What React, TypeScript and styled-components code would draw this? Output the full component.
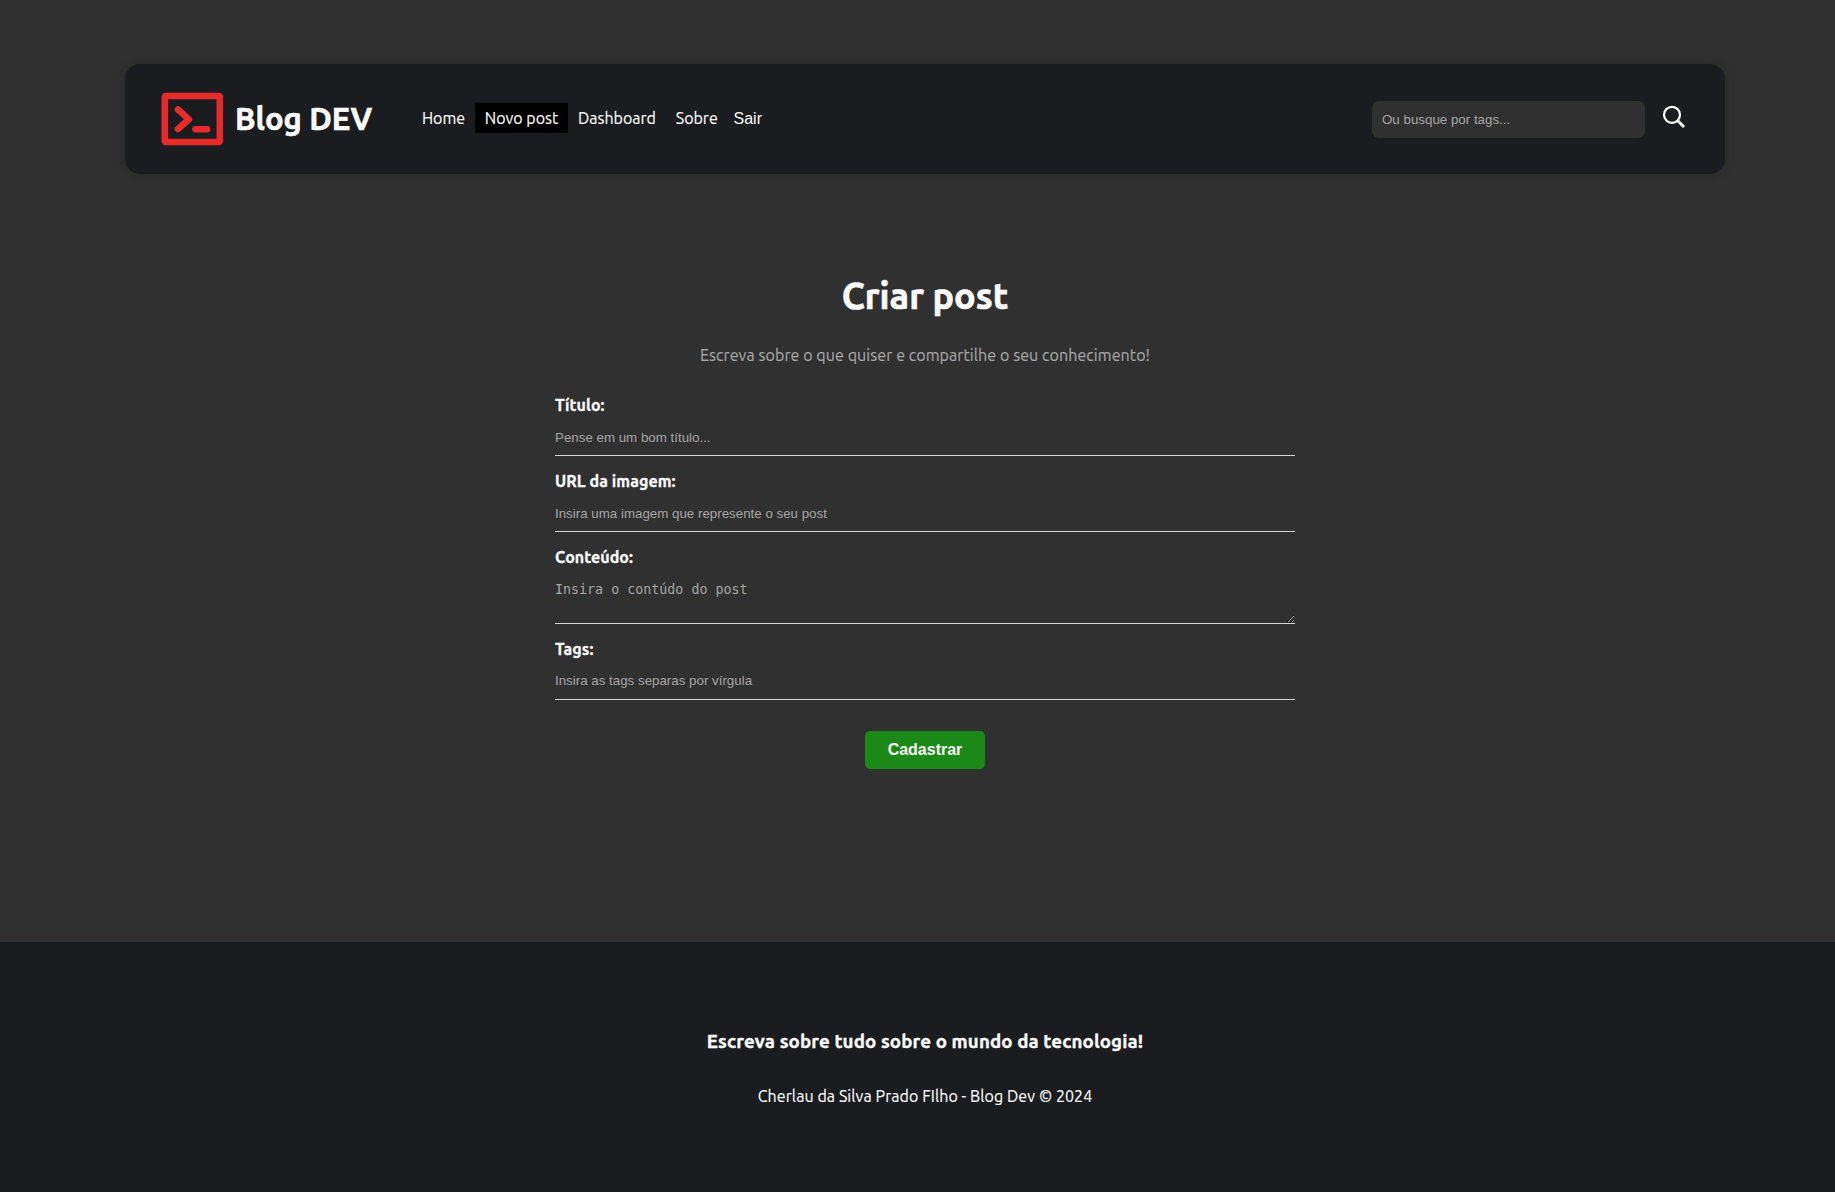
import React from "react";
import styled, { createGlobalStyle } from "styled-components";

const GlobalStyle = createGlobalStyle`
  * { box-sizing: border-box; margin: 0; padding: 0; }
  body {
    background: #303030;
    color: #fafafa;
    font-family: Ubuntu, "Noto Sans", sans-serif;
    font-size: 16px;
    line-height: 18px;
  }
`;

const Page = styled.div`
  min-height: 1192px;
  display: flex;
  flex-direction: column;
  align-items: center;
  padding-top: 64px;
`;

const Header = styled.header`
  width: 1600px;
  height: 110px;
  margin-left: 15px;
  display: flex;
  align-items: center;
  padding: 0 39px 0 36px;
  background: #1b1c1f;
  border-radius: 15px;
  box-shadow: 0 0 10px rgba(0, 0, 0, 0.2);
`;

const Brand = styled.a`
  display: flex;
  align-items: center;
  gap: 12px;
  width: 251px;
  font-size: 31px;
  font-weight: 700;
  white-space: nowrap;
  -webkit-text-stroke: 0.6px currentColor;
`;

const Nav = styled.nav`
  display: flex;
  align-items: center;
  flex: 1;
`;

const NavItem = styled.a<{ $active?: boolean; $width: number }>`
  width: ${(p) => p.$width}px;
  height: 30px;
  line-height: 30px;
  margin-bottom: 2px;
  text-align: center;
  white-space: nowrap;
  -webkit-text-stroke: 0.15px currentColor;
  background: ${(p) => (p.$active ? "#000" : "transparent")};
`;

const Logout = styled.button`
  padding: 0 6px;
  border: 0;
  background: transparent;
  color: #fafafa;
  font: 16px "Liberation Sans", Arial, sans-serif;
`;

const Search = styled.form`
  display: flex;
  align-items: center;
  gap: 17px;
`;

const SearchInput = styled.input`
  width: 273px;
  height: 37px;
  padding: 0 10px;
  border: 0;
  border-radius: 7px;
  background: #303030;
  font: 13.333px "Liberation Sans", Arial, sans-serif;
  &::placeholder { color: #a6a6a6; }
`;

const SearchButton = styled.button`
  display: flex;
  width: 24px;
  height: 24px;
  margin-bottom: 5px;
  border: 0;
  background: transparent;
`;

const Main = styled.main`
  width: 740px;
  height: 768px;
  margin-left: 15px;
  padding-top: 100px;
  display: flex;
  flex-direction: column;
  align-items: center;
`;

const Title = styled.h1`
  height: 44px;
  line-height: 44px;
  font-size: 36px;
  -webkit-text-stroke: 0.7px currentColor;
`;

const Subtitle = styled.p`
  margin-top: 28px;
  color: #a6a6a6;
  letter-spacing: 0.08px;
  -webkit-text-stroke: 0.15px currentColor;
`;

const Form = styled.form`
  width: 100%;
  margin-top: 32px;
  display: flex;
  flex-direction: column;
  align-items: center;
`;

const Field = styled.label`
  display: flex;
  flex-direction: column;
  width: 100%;
  margin-bottom: 16px;
`;

const FieldName = styled.span`
  font-weight: 700;
  letter-spacing: 0.06px;
  -webkit-text-stroke: 0.3px currentColor;
`;

const Input = styled.input<{ $lift?: number }>`
  height: 35px;
  margin-top: 7px;
  padding-bottom: ${(p) => p.$lift ?? 2}px;
  border: 0;
  border-bottom: 1px solid #d5d5d5;
  background: transparent;
  font: 13.333px "Liberation Sans", Arial, sans-serif;
  &::placeholder { color: #a6a6a6; }
`;

const TextArea = styled.textarea`
  height: 51px;
  margin-top: 7px;
  padding-top: 9px;
  border: 0;
  border-bottom: 1px solid #d5d5d5;
  background: transparent;
  resize: vertical;
  font: 13.333px "DejaVu Sans Mono", monospace;
  &::placeholder { color: #a6a6a6; }
`;

const Submit = styled.button`
  width: 120px;
  height: 38px;
  margin-top: 15px;
  border: 0;
  border-radius: 5px;
  background: #1a8917;
  color: #fafafa;
  font: 700 16px "Liberation Sans", Arial, sans-serif;
`;

const Footer = styled.footer`
  width: 100%;
  height: 250px;
  padding: 89px 0 0 15px;
  display: flex;
  flex-direction: column;
  align-items: center;
  gap: 35px;
  background: #1b1c1f;
`;

const Slogan = styled.h3`
  height: 21px;
  line-height: 21px;
  font-size: 18.72px;
  letter-spacing: 0.12px;
  -webkit-text-stroke: 0.35px currentColor;
`;

const Credits = styled.p`
  letter-spacing: 0.08px;
  -webkit-text-stroke: 0.15px currentColor;
`;

const TerminalLogo = () => (
  <svg width="62" height="54" viewBox="0 0 62 54" fill="none" stroke="#e82a2a">
    <rect x="3.8" y="4" width="55" height="46" rx="1" strokeWidth="6.6" />
    <path d="M17 17.5 27.8 27.4 17 37M34.5 37.2h11.5" strokeWidth="6.6" strokeLinecap="round" strokeLinejoin="round" />
  </svg>
);

const SearchIcon = () => (
  <svg width="24" height="24" viewBox="0 0 24 24" fill="none" stroke="#fff">
    <circle cx="10" cy="9.8" r="8" strokeWidth="2.2" />
    <path d="M15.5 15.5 22 22" strokeWidth="3" />
  </svg>
);

export default function App() {
  return (
    <>
      <GlobalStyle />
      <Page>
        <Header>
          <Brand>
            <TerminalLogo />
            <span>Blog DEV</span>
          </Brand>
          <Nav>
            <NavItem $width={63}>Home</NavItem>
            <NavItem $width={93} $active>Novo post</NavItem>
            <NavItem $width={98}>Dashboard</NavItem>
            <NavItem $width={61.5}>Sobre</NavItem>
            <Logout type="button">Sair</Logout>
          </Nav>
          <Search>
            <SearchInput placeholder="Ou busque por tags..." />
            <SearchButton type="button" aria-label="Buscar"><SearchIcon /></SearchButton>
          </Search>
        </Header>
        <Main>
          <Title>Criar post</Title>
          <Subtitle>Escreva sobre o que quiser e compartilhe o seu conhecimento!</Subtitle>
          <Form>
            <Field>
              <FieldName>Título:</FieldName>
              <Input placeholder="Pense em um bom título..." />
            </Field>
            <Field>
              <FieldName>URL da imagem:</FieldName>
              <Input placeholder="Insira uma imagem que represente o seu post" />
            </Field>
            <Field>
              <FieldName>Conteúdo:</FieldName>
              <TextArea placeholder="Insira o contúdo do post" />
            </Field>
            <Field>
              <FieldName>Tags:</FieldName>
              <Input $lift={4} placeholder="Insira as tags separas por vírgula" />
            </Field>
            <Submit type="button">Cadastrar</Submit>
          </Form>
        </Main>
        <Footer>
          <Slogan>Escreva sobre tudo sobre o mundo da tecnologia!</Slogan>
          <Credits>Cherlau da Silva Prado FIlho - Blog Dev © 2024</Credits>
        </Footer>
      </Page>
    </>
  );
}
